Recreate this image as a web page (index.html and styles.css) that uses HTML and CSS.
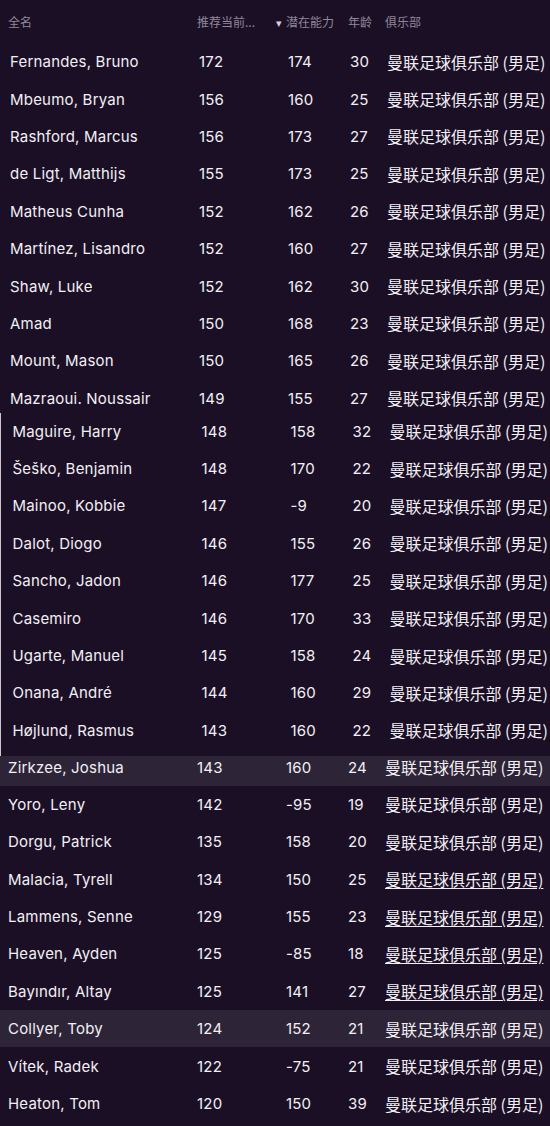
FILE: index.html
```html
<!DOCTYPE html>
<html lang="zh">
<head>
<meta charset="utf-8">
<title>球员列表</title>
<link rel="stylesheet" href="styles.css">
</head>
<body>
<div class="page">
  <div class="head">
    <span>全名</span>
    <span>推荐当前...</span>
    <span class="sorted"><span class="arrow">▾</span>潜在能力</span>
    <span>年龄</span>
    <span>俱乐部</span>
  </div>

  <div class="sec sec-a">
    <div class="row"><span>Fernandes, Bruno</span><span>172</span><span>174</span><span>30</span><span class="club">曼联足球俱乐部 (男足)</span></div>
    <div class="row"><span>Mbeumo, Bryan</span><span>156</span><span>160</span><span>25</span><span class="club">曼联足球俱乐部 (男足)</span></div>
    <div class="row"><span>Rashford, Marcus</span><span>156</span><span>173</span><span>27</span><span class="club">曼联足球俱乐部 (男足)</span></div>
    <div class="row"><span>de Ligt, Matthijs</span><span>155</span><span>173</span><span>25</span><span class="club">曼联足球俱乐部 (男足)</span></div>
    <div class="row"><span>Matheus Cunha</span><span>152</span><span>162</span><span>26</span><span class="club">曼联足球俱乐部 (男足)</span></div>
    <div class="row"><span>Martínez, Lisandro</span><span>152</span><span>160</span><span>27</span><span class="club">曼联足球俱乐部 (男足)</span></div>
    <div class="row"><span>Shaw, Luke</span><span>152</span><span>162</span><span>30</span><span class="club">曼联足球俱乐部 (男足)</span></div>
    <div class="row"><span>Amad</span><span>150</span><span>168</span><span>23</span><span class="club">曼联足球俱乐部 (男足)</span></div>
    <div class="row"><span>Mount, Mason</span><span>150</span><span>165</span><span>26</span><span class="club">曼联足球俱乐部 (男足)</span></div>
    <div class="row"><span>Mazraoui. Noussair</span><span>149</span><span>155</span><span>27</span><span class="club">曼联足球俱乐部 (男足)</span></div>
  </div>

  <div class="sec sec-b">
    <div class="row"><span>Maguire, Harry</span><span>148</span><span>158</span><span>32</span><span class="club">曼联足球俱乐部 (男足)</span></div>
    <div class="row"><span>Šeško, Benjamin</span><span>148</span><span>170</span><span>22</span><span class="club">曼联足球俱乐部 (男足)</span></div>
    <div class="row"><span>Mainoo, Kobbie</span><span>147</span><span>-9</span><span>20</span><span class="club">曼联足球俱乐部 (男足)</span></div>
    <div class="row"><span>Dalot, Diogo</span><span>146</span><span>155</span><span>26</span><span class="club">曼联足球俱乐部 (男足)</span></div>
    <div class="row"><span>Sancho, Jadon</span><span>146</span><span>177</span><span>25</span><span class="club">曼联足球俱乐部 (男足)</span></div>
    <div class="row"><span>Casemiro</span><span>146</span><span>170</span><span>33</span><span class="club">曼联足球俱乐部 (男足)</span></div>
    <div class="row"><span>Ugarte, Manuel</span><span>145</span><span>158</span><span>24</span><span class="club">曼联足球俱乐部 (男足)</span></div>
    <div class="row"><span>Onana, André</span><span>144</span><span>160</span><span>29</span><span class="club">曼联足球俱乐部 (男足)</span></div>
    <div class="row"><span>Højlund, Rasmus</span><span>143</span><span>160</span><span>22</span><span class="club">曼联足球俱乐部 (男足)</span></div>
  </div>

  <div class="sec sec-c">
    <div class="row row-first hl"><span>Zirkzee, Joshua</span><span>143</span><span>160</span><span>24</span><span class="club">曼联足球俱乐部 (男足)</span></div>
    <div class="row"><span>Yoro, Leny</span><span>142</span><span>-95</span><span>19</span><span class="club">曼联足球俱乐部 (男足)</span></div>
    <div class="row"><span>Dorgu, Patrick</span><span>135</span><span>158</span><span>20</span><span class="club">曼联足球俱乐部 (男足)</span></div>
    <div class="row"><span>Malacia, Tyrell</span><span>134</span><span>150</span><span>25</span><span class="club link">曼联足球俱乐部 (男足)</span></div>
    <div class="row"><span>Lammens, Senne</span><span>129</span><span>155</span><span>23</span><span class="club link">曼联足球俱乐部 (男足)</span></div>
    <div class="row"><span>Heaven, Ayden</span><span>125</span><span>-85</span><span>18</span><span class="club link">曼联足球俱乐部 (男足)</span></div>
    <div class="row"><span>Bayındır, Altay</span><span>125</span><span>141</span><span>27</span><span class="club link">曼联足球俱乐部 (男足)</span></div>
    <div class="row hl"><span>Collyer, Toby</span><span>124</span><span>152</span><span>21</span><span class="club">曼联足球俱乐部 (男足)</span></div>
    <div class="row"><span>Vítek, Radek</span><span>122</span><span>-75</span><span>21</span><span class="club">曼联足球俱乐部 (男足)</span></div>
    <div class="row"><span>Heaton, Tom</span><span>120</span><span>150</span><span>39</span><span class="club">曼联足球俱乐部 (男足)</span></div>
  </div>
</div>
</body>
</html>
```

FILE: styles.css
```css
html, body {
  margin: 0;
  padding: 0;
  background: #1b0f26;
}

.page {
  width: 550px;
  height: 1126px;
  overflow: hidden;
  background: #1b0f26;
  color: #f2eff4;
  font-family: Inter, "Noto Sans CJK SC", sans-serif;
}

.head,
.row {
  display: grid;
  grid-template-columns: 189px 89px 62px 37px 1fr;
  align-items: center;
  padding-left: 8px;
  white-space: nowrap;
}

.head {
  height: 43px;
  font-family: "Noto Sans CJK SC", sans-serif;
  font-size: 12px;
  color: #8f8798;
}

.sorted {
  margin-left: -10px;
}

.arrow {
  display: inline-block;
  width: 10px;
  font-size: 11px;
  color: #d6d0dc;
}

.sec {
  overflow: hidden;
}

.sec-a {
  height: 369.5px;
  padding-left: 2px;
}

.sec-b {
  height: 343.5px;
  padding-left: 3.5px;
  border-left: 1px solid #cbc6d0;
  box-sizing: border-box;
}

.sec-c {
  height: 370px;
}

.row {
  height: 37.4px;
  font-size: 15px;
  letter-spacing: 0.2px;
}

.row-first {
  margin-top: -7.7px;
}

.hl {
  background: #2e2438;
}

.club {
  font-family: "Noto Sans CJK SC", sans-serif;
  font-size: 16px;
  letter-spacing: 0;
}

.link {
  text-decoration: underline;
  text-underline-offset: 2px;
}
```
